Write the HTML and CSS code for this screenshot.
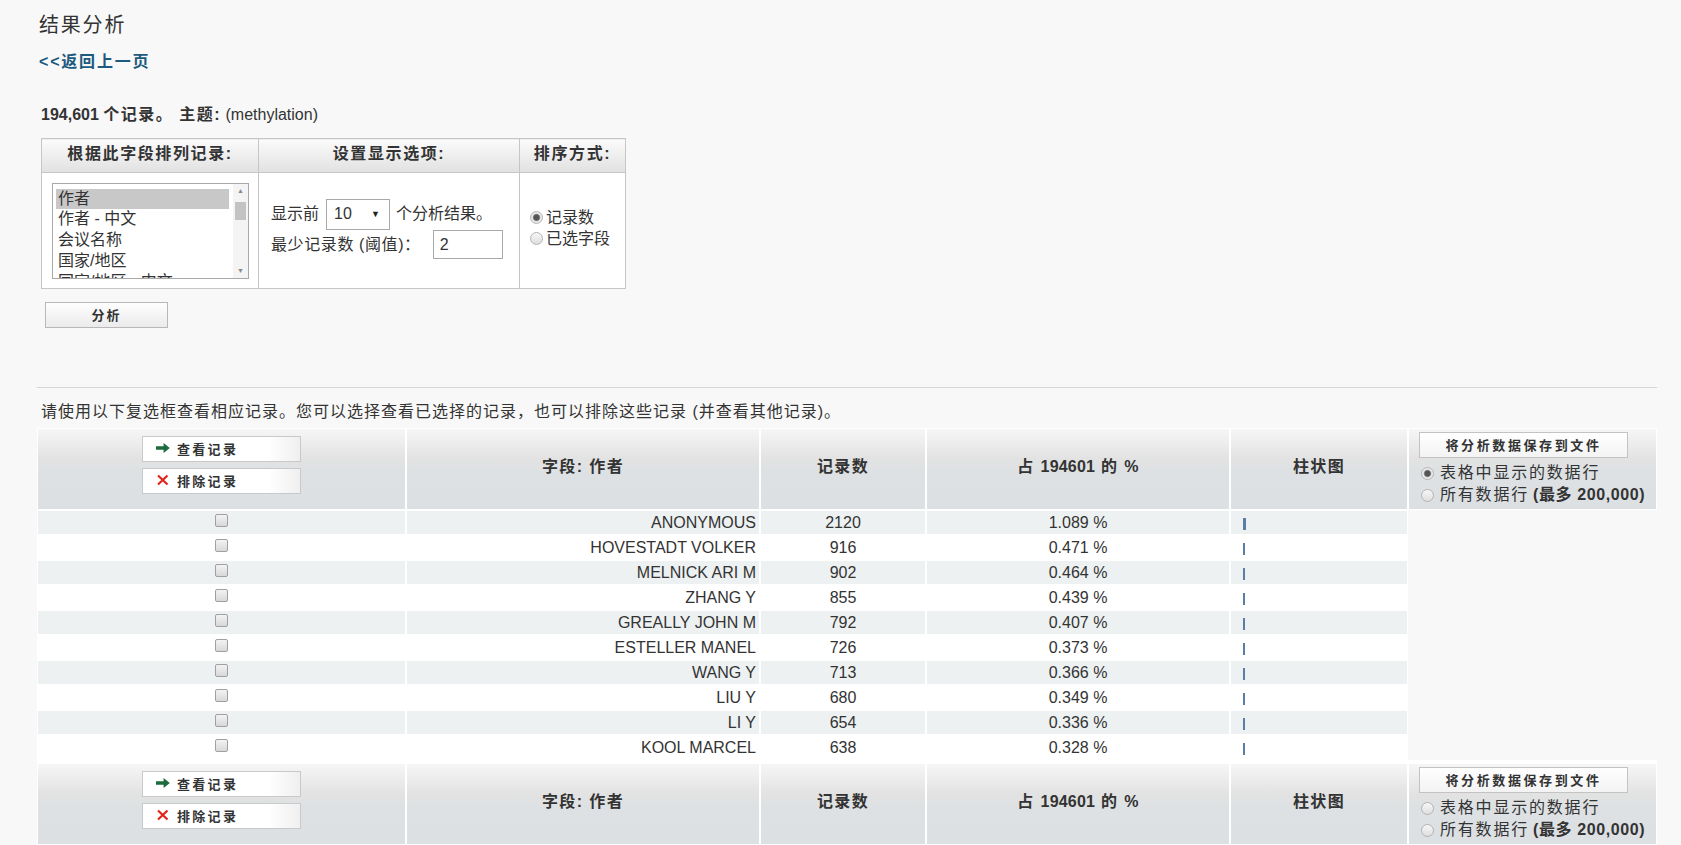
FILE: index.html
```html
<!DOCTYPE html>
<html lang="zh-CN">
<head>
<meta charset="utf-8">
<title>结果分析</title>
<link rel="stylesheet" href="styles.css">
</head>
<body>
<div class="page">
  <h1 class="title">结果分析</h1>
  <p class="backline"><a class="back" href="#">&lt;&lt;返回上一页</a></p>
  <p class="summary"><b>194,601 <span class="cjk">个记录。 主题:</span></b> (methylation)</p>

  <table class="opts">
    <colgroup><col class="o1"><col class="o2"><col class="o3"></colgroup>
    <thead>
      <tr><th>根据此字段排列记录:</th><th>设置显示选项:</th><th>排序方式:</th></tr>
    </thead>
    <tbody>
      <tr>
        <td class="oc1">
          <div class="listbox">
            <ul class="lb-items">
              <li class="sel">作者</li>
              <li>作者 - 中文</li>
              <li>会议名称</li>
              <li>国家/地区</li>
              <li>国家/地区 - 中文</li>
            </ul>
            <div class="lb-scroll">
              <span class="lb-up">▲</span>
              <span class="lb-track"><span class="lb-thumb"></span></span>
              <span class="lb-down">▼</span>
            </div>
          </div>
        </td>
        <td class="oc2">
          <div class="optrow r1">
            <span>显示前</span>
            <span class="fsel"><span class="fsel-val">10</span><span class="fsel-arr">▼</span></span>
            <span>个分析结果。</span>
          </div>
          <div class="optrow r2">
            <span class="thr-label">最少记录数 (阈值)：</span>
            <input class="thr" type="text" value="2">
          </div>
        </td>
        <td class="oc3">
          <label class="sortopt"><input class="rad" type="radio" name="sort" checked>记录数</label>
          <label class="sortopt"><input class="rad" type="radio" name="sort">已选字段</label>
        </td>
      </tr>
    </tbody>
  </table>

  <button class="analyze">分析</button>

  <hr class="sep">

  <p class="hint">请使用以下复选框查看相应记录。您可以选择查看已选择的记录，也可以排除这些记录 (并查看其他记录)。</p>

  <table class="results">
    <colgroup>
      <col class="w1"><col class="w2"><col class="w3"><col class="w4"><col class="w5"><col class="w6">
    </colgroup>
    <thead>
      <tr class="head">
        <th class="acts">
          <button class="act"><svg class="ico" width="14" height="12" viewBox="0 0 14 12"><path d="M0 4.3h7.6V1l6.2 5-6.2 5V7.7H0z" fill="#1b6b3c"/></svg>查看记录</button>
          <button class="act"><svg class="ico" width="14" height="12" viewBox="0 0 14 12"><path d="M2 1.5l9.5 9M11.5 1.5L2 10.5" stroke="#e2231a" stroke-width="2.2" fill="none"/></svg>排除记录</button>
        </th>
        <th class="lbl">字段: 作者</th>
        <th class="lbl">记录数</th>
        <th class="lbl">占 <span class="lat">194601</span> 的 <span class="lat">%</span></th>
        <th class="lbl">柱状图</th>
        <th class="save">
          <button class="savebtn">将分析数据保存到文件</button>
          <label class="opt"><input class="rad" type="radio" name="s1" checked>表格中显示的数据行</label>
          <label class="opt"><input class="rad" type="radio" name="s1">所有数据行 <b>(最多 200,000)</b></label>
        </th>
      </tr>
    </thead>
    <tbody>
      <tr class="odd"><td class="chk"><input class="cb" type="checkbox"></td><td class="name">ANONYMOUS</td><td class="num">2120</td><td class="num">1.089 %</td><td class="barc"><span class="bar" style="width:3px"></span></td></tr>
      <tr><td class="chk"><input class="cb" type="checkbox"></td><td class="name">HOVESTADT VOLKER</td><td class="num">916</td><td class="num">0.471 %</td><td class="barc"><span class="bar" style="width:2px"></span></td></tr>
      <tr class="odd"><td class="chk"><input class="cb" type="checkbox"></td><td class="name">MELNICK ARI M</td><td class="num">902</td><td class="num">0.464 %</td><td class="barc"><span class="bar" style="width:2px"></span></td></tr>
      <tr><td class="chk"><input class="cb" type="checkbox"></td><td class="name">ZHANG Y</td><td class="num">855</td><td class="num">0.439 %</td><td class="barc"><span class="bar" style="width:2px"></span></td></tr>
      <tr class="odd"><td class="chk"><input class="cb" type="checkbox"></td><td class="name">GREALLY JOHN M</td><td class="num">792</td><td class="num">0.407 %</td><td class="barc"><span class="bar" style="width:2px"></span></td></tr>
      <tr><td class="chk"><input class="cb" type="checkbox"></td><td class="name">ESTELLER MANEL</td><td class="num">726</td><td class="num">0.373 %</td><td class="barc"><span class="bar" style="width:2px"></span></td></tr>
      <tr class="odd"><td class="chk"><input class="cb" type="checkbox"></td><td class="name">WANG Y</td><td class="num">713</td><td class="num">0.366 %</td><td class="barc"><span class="bar" style="width:2px"></span></td></tr>
      <tr><td class="chk"><input class="cb" type="checkbox"></td><td class="name">LIU Y</td><td class="num">680</td><td class="num">0.349 %</td><td class="barc"><span class="bar" style="width:2px"></span></td></tr>
      <tr class="odd"><td class="chk"><input class="cb" type="checkbox"></td><td class="name">LI Y</td><td class="num">654</td><td class="num">0.336 %</td><td class="barc"><span class="bar" style="width:2px"></span></td></tr>
      <tr><td class="chk"><input class="cb" type="checkbox"></td><td class="name">KOOL MARCEL</td><td class="num">638</td><td class="num">0.328 %</td><td class="barc"><span class="bar" style="width:2px"></span></td></tr>
    </tbody>
    <tfoot>
      <tr class="head foot">
        <th class="acts">
          <button class="act"><svg class="ico" width="14" height="12" viewBox="0 0 14 12"><path d="M0 4.3h7.6V1l6.2 5-6.2 5V7.7H0z" fill="#1b6b3c"/></svg>查看记录</button>
          <button class="act"><svg class="ico" width="14" height="12" viewBox="0 0 14 12"><path d="M2 1.5l9.5 9M11.5 1.5L2 10.5" stroke="#e2231a" stroke-width="2.2" fill="none"/></svg>排除记录</button>
        </th>
        <th class="lbl">字段: 作者</th>
        <th class="lbl">记录数</th>
        <th class="lbl">占 <span class="lat">194601</span> 的 <span class="lat">%</span></th>
        <th class="lbl">柱状图</th>
        <th class="save">
          <button class="savebtn">将分析数据保存到文件</button>
          <label class="opt"><input class="rad" type="radio" name="s2">表格中显示的数据行</label>
          <label class="opt"><input class="rad" type="radio" name="s2">所有数据行 <b>(最多 200,000)</b></label>
        </th>
      </tr>
    </tfoot>
  </table>
</div>
</body>
</html>
```

FILE: styles.css
```css
* { box-sizing: border-box; }
html, body { margin: 0; padding: 0; }
body {
  background: #f8f8f8;
  color: #333;
  font-family: "Liberation Sans", Arial, "Noto Sans CJK SC", sans-serif;
  font-size: 16px;
}
.page { width: 1657px; padding-left: 37px; }

.title {
  margin: 11px 0 0 2px;
  height: 28px;
  font-size: 20px;
  line-height: 28px;
  font-weight: normal;
  letter-spacing: 1.8px;
  color: #333;
}
.backline { margin: 13px 0 0 2px; line-height: 20px; height: 20px; }
.back {
  font-size: 16px;
  font-weight: bold;
  color: #1d5a80;
  text-decoration: none;
  letter-spacing: 1.8px;
}
.summary { margin: 33px 0 0 4px; font-size: 16px; line-height: 20px; height: 20px; }
.summary b { font-weight: bold; }
.summary .cjk { letter-spacing: 1.5px; }

/* options table */
.opts {
  margin: 13px 0 0 4px;
  border-collapse: collapse;
  table-layout: fixed;
  width: 584px;
  background: #fff;
}
.o1 { width: 217px; }
.o2 { width: 261px; }
.o3 { width: 106px; }
.opts th, .opts td { border: 1px solid #c6c6c6; padding: 0; }
.opts th {
  height: 34px;
  padding-bottom: 3px;
  line-height: 20px;
  background: linear-gradient(#fbfbfb, #e1e1e1);
  font-size: 16px;
  font-weight: bold;
  letter-spacing: 1.6px;
  text-align: center;
  color: #333;
}
.opts td { height: 116px; vertical-align: middle; }
.opts td.oc1 { padding-left: 10px; }
.listbox {
  display: flex;
  width: 197px;
  height: 96px;
  border: 1px solid #a8a8a8;
  background: #fff;
  overflow: hidden;
}
.lb-items {
  flex: 1;
  list-style: none;
  margin: 0;
  padding: 5px 4px 0 3px;
  font-size: 16px;
  line-height: 20.8px;
  color: #333;
  white-space: nowrap;
  overflow: hidden;
}
.lb-items li { padding-left: 2px; height: 20.8px; }
.lb-items li.sel { background: #c8c8c8; }
.lb-scroll {
  width: 15px;
  display: flex;
  flex-direction: column;
  align-items: center;
  background: #f4f4f4;
}
.lb-up, .lb-down { font-size: 7px; line-height: 14px; height: 14px; color: #8a8a8a; }
.lb-track { flex: 1; width: 100%; padding-top: 4px; display: flex; justify-content: center; }
.lb-thumb { width: 11px; height: 18px; background: #c3c3c3; }

.opts td.oc2 { padding: 0 0 3px 12px; }
.optrow { display: flex; align-items: center; white-space: nowrap; font-size: 16px; line-height: 20px; }
.optrow.r1 { height: 31px; }
.optrow.r2 { height: 30px; }
.fsel {
  display: inline-flex;
  align-items: center;
  justify-content: space-between;
  width: 64px;
  height: 31px;
  margin: 0 6px 0 7px;
  padding: 0 9px 0 7px;
  border: 1px solid #a9a9a9;
  background: #fff;
}
.fsel-val { font-size: 16px; }
.fsel-arr { font-size: 9px; color: #222; }
.thr-label { letter-spacing: 0.6px; }
.thr {
  width: 70px;
  height: 29px;
  margin-left: 12px;
  border: 1px solid #a9a9a9;
  padding: 0 6px;
  font: 16px "Liberation Sans", Arial, sans-serif;
  color: #333;
  background: #fff;
}
.opts td.oc3 { padding: 0 0 5px 10px; }
.sortopt { display: flex; align-items: center; height: 21px; line-height: 21px; font-size: 16px; white-space: nowrap; }

.rad {
  -webkit-appearance: none;
  appearance: none;
  width: 13px;
  height: 13px;
  margin: 0 3px 0 0;
  border: 1px solid #b3b3b3;
  border-radius: 50%;
  background: linear-gradient(#f7f7f7, #dedede);
  flex: none;
}
.rad:checked {
  background: radial-gradient(circle, #555 0 2.6px, #9a9a9a 3.4px, #e9e9e9 4.2px, #f4f4f4 100%);
}

.analyze {
  display: block;
  margin: 13px 0 0 8px;
  width: 123px;
  height: 26px;
  border: 1px solid #b8b8b8;
  background: linear-gradient(#fefefe, #ebebeb);
  font-family: "Liberation Sans", Arial, "Noto Sans CJK SC", sans-serif;
  font-size: 13px;
  font-weight: bold;
  letter-spacing: 2px;
  color: #333;
  padding: 0 0 2px;
}

.sep {
  margin: 59px 0 0;
  width: 1620px;
  height: 0;
  border: 0;
  border-top: 1px solid #d6d6d6;
}
.hint { margin: 14px 0 0 4px; height: 20px; line-height: 20px; font-size: 16px; letter-spacing: 1px; white-space: nowrap; }

/* results table */
.results {
  margin-top: 6px;
  width: 1620px;
  table-layout: fixed;
  border-collapse: separate;
  border-spacing: 0;
}
.w1 { width: 369px; }
.w2 { width: 354px; }
.w3 { width: 166px; }
.w4 { width: 304px; }
.w5 { width: 178px; }
.w6 { width: 249px; }
.results th, .results td { border: 1px solid #fff; padding: 0; }
.head th {
  height: 82px;
  background: linear-gradient(#f6f6f6 0%, #e2e2e2 38%, #dde1e3 55%, #dce0e3 100%);
  font-size: 16px;
  font-weight: bold;
  color: #333;
  text-align: center;
  vertical-align: middle;
  line-height: 20px;
}
.head th.lbl { padding-bottom: 4px; letter-spacing: 1.4px; }
.head th.lbl .lat { letter-spacing: 0.2px; }
.foot th { border-top: 4px solid #fff; height: 85px; }
.head th.acts { vertical-align: top; padding-top: 7px; }
.act {
  display: flex;
  align-items: center;
  width: 159px;
  height: 26px;
  margin: 0 auto 6px;
  padding: 0 0 2px 13px;
  border: 1px solid #c9c9c9;
  background: linear-gradient(to right, #fff 80%, #efefef);
  font-family: "Liberation Sans", Arial, "Noto Sans CJK SC", sans-serif;
  font-size: 13px;
  font-weight: bold;
  letter-spacing: 2.3px;
  color: #333;
}
.act .ico { margin-right: 7px; flex: none; }
.head th.save { text-align: left; vertical-align: top; padding: 3px 0 0 10px; font-weight: normal; }
.savebtn {
  display: block;
  width: 209px;
  height: 26px;
  padding: 0 0 2px;
  border: 1px solid #c3c3c3;
  background: linear-gradient(#fff, #f3f3f3);
  font-family: "Liberation Sans", Arial, "Noto Sans CJK SC", sans-serif;
  font-size: 13px;
  font-weight: bold;
  letter-spacing: 2.6px;
  color: #333;
  margin-bottom: 4px;
}
.opt {
  display: flex;
  align-items: center;
  height: 22px;
  line-height: 22px;
  font-size: 16px;
  letter-spacing: 1.8px;
  white-space: nowrap;
  font-weight: normal;
}
.opt .rad { margin: 0 6px 0 2px; }
.opt b { font-weight: bold; margin-left: 4px; letter-spacing: 0.6px; }

.results tbody td { height: 25px; line-height: 23px; font-size: 16px; color: #333; background: #fff; }
.results tbody tr.odd td { background: #edf1f2; }
.results td.chk { text-align: center; vertical-align: top; }
.cb {
  -webkit-appearance: none;
  appearance: none;
  display: inline-block;
  width: 13px;
  height: 13px;
  margin: 3px 0 0;
  border: 1px solid #a0a0a0;
  border-radius: 2px;
  background: linear-gradient(#f3f3f3, #d8d8d8);
  vertical-align: top;
}
.results td.name { text-align: right; padding-right: 3px; white-space: nowrap; }
.results td.num { text-align: center; }
.results td.barc { padding-left: 12px; }
.bar { display: inline-block; height: 12px; background: #5b7ea6; vertical-align: middle; }
```
